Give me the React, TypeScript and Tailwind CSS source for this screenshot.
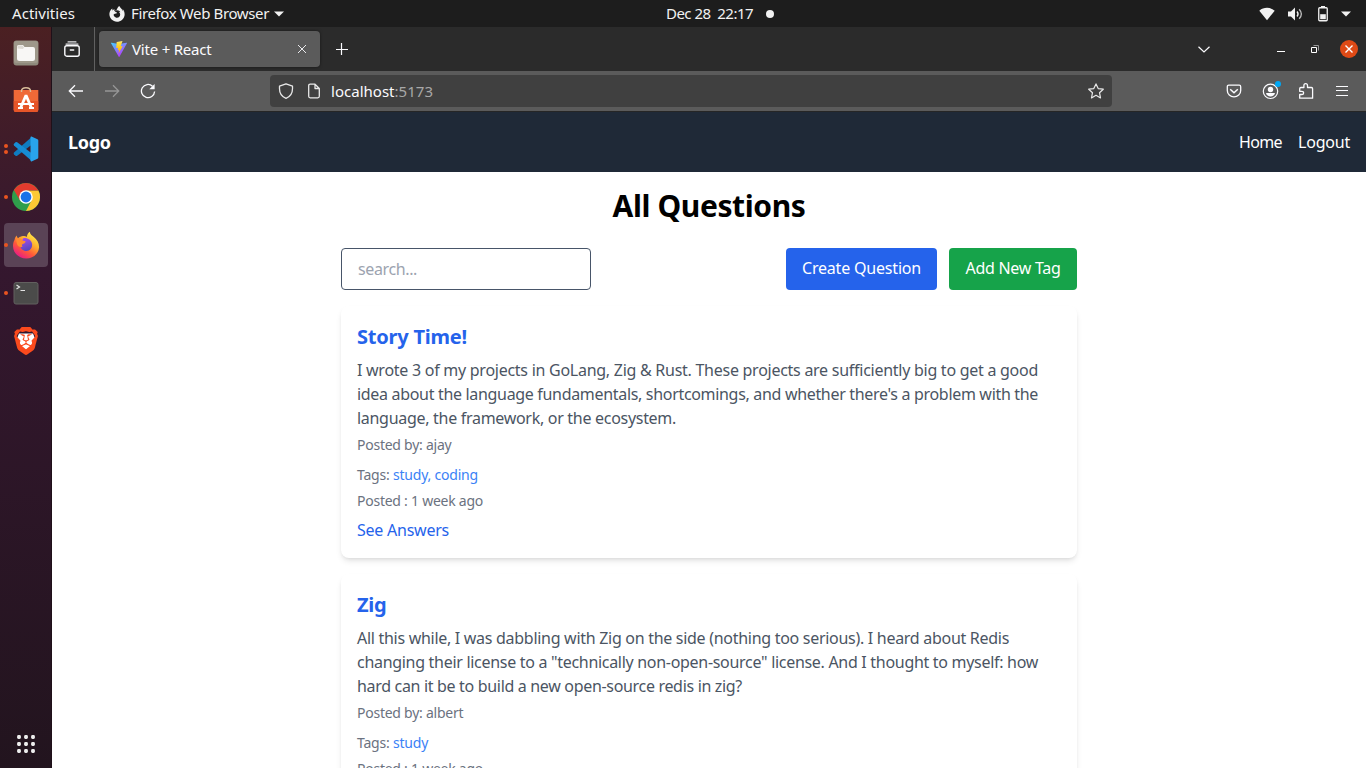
import type { ReactNode } from 'react';
import { FaFirefoxBrowser } from 'react-icons/fa';
import { SiBrave } from 'react-icons/si';

function Line({ children, className = '' }: { children: ReactNode; className?: string }) {
  return <span className={`block whitespace-nowrap ${className}`}>{children}</span>;
}

function TopBar() {
  return (
    <header className="flex h-[27px] shrink-0 items-center bg-[#1d1d1d] text-[15px] leading-[27px] text-[#f2f2f2]">
      <div className="flex w-[666px] items-center pl-3">
        <Line className="w-[97px] tracking-[0.05px]">Activities</Line>
        <FaFirefoxBrowser className="h-4 w-4" />
        <Line className="ml-[6px] w-[138px] tracking-[-0.372px]">Firefox Web Browser</Line>
        <svg className="ml-[5px] h-[6px] w-[10px]" viewBox="0 0 10 6"><path d="M0 0.5h10L5 5.5z" fill="currentColor" /></svg>
      </div>
      <Line className="w-[100px] pb-px whitespace-pre tracking-[-0.52px]">{'Dec 28  22:17'}</Line>
      <span className="h-2 w-2 rounded-full bg-[#f2f2f2]" />
      <div className="ml-auto flex items-center pr-[15px]">
        <svg className="h-4 w-4" viewBox="0 0 16 16"><path d="M0.3 4.7C4.7.9 11.300.9 15.700 4.700L8 14.200z" fill="currentColor" /></svg>
        <svg className="ml-[13px] h-4 w-4" viewBox="0 0 16 16" fill="none" stroke="currentColor">
          <path d="M0 5.500h3L7 1.500v13l-4-4H0z" fill="currentColor" stroke="none" />
          <path d="M9 5.500c1.300 1.500 1.300 3.500 0 5" strokeWidth="1.300" />
          <path d="M11.200 3.200c2.700 3 2.700 6.600 0 9.600" strokeWidth="1.300" opacity=".75" />
        </svg>
        <svg className="ml-[14px] h-4 w-[10px]" viewBox="0 0 10 16"><path d="M3 0h4v1.500H3z" fill="currentColor" /><rect x=".75" y="1.750" width="8.500" height="13" rx="1" fill="none" stroke="currentColor" strokeWidth="1.300" /><path d="M2.200 8.200h5.600v5H2.200z" fill="currentColor" /></svg>
        <svg className="ml-[13px] h-[6px] w-[10px]" viewBox="0 0 10 6"><path d="M0 0.500h10L5 5.500z" fill="currentColor" /></svg>
      </div>
    </header>
  );
}

function DockItem({ children, active = false, dots = 0 }: { children: ReactNode; active?: boolean; dots?: number }) {
  return (
    <div className="flex h-11 w-full items-center">
      <div className="flex w-1 shrink-0" />
      <div className={`relative flex h-11 w-11 shrink-0 items-center justify-center rounded-[4px] ${active ? 'bg-[#5a4356]' : ''}`}>
        <div className="absolute top-0 left-0 flex h-11 flex-col items-center justify-center gap-[2px]">
          {Array.from({ length: dots }, (_, i) => <span key={i} className="h-1 w-1 rounded-full bg-[#e95420]" />)}
        </div>
        {children}
      </div>
    </div>
  );
}

function Dock() {
  return (
    <aside className="flex w-[52px] shrink-0 flex-col border-r border-[#1f1019] bg-linear-to-b from-[#4b2022] via-[#35172f] via-30% to-[#22141e]">
      <div className="flex flex-col gap-1 pt-1">
        <DockItem>
          <svg className="h-[26px] w-[26px]" viewBox="0 0 26 26">
            <rect x=".5" y=".5" width="25" height="25" rx="3" fill="#8f8a7c" />
            <rect x="1" y="1" width="24" height="22" rx="2.500" fill="#9e988a" />
            <path d="M4 8V6.500Q4 5 5.500 5H10l1.500 2H20q2 0 2 2v9.500q0 2.500-2.500 2.500h-13Q4 21 4 18.500z" fill="#f8f7f5" />
            <path d="M4.500 8.500V6.500Q4.500 5.500 5.500 5.500h4l1.500 2-1 1.500z" fill="#dedbd4" />
          </svg>
        </DockItem>
        <DockItem>
          <svg className="mb-[2px] h-[26px] w-[26px]" viewBox="0 0 26 26">
            <path d="M.7 3h24.600v20q0 2-2 2H2.700q-2 0-2-2z" fill="#ef6937" />
            <path d="M.7 14h24.600v9q0 2-2 2H2.700q-2 0-2-2z" fill="#e65528" />
            <path d="M8.500 5V4Q8.500.8 13 .8t4.500 3.200V5" fill="none" stroke="#d8bc9a" strokeWidth="1.400" />
            <path d="M7.300 21.500 13 8.300l5.700 13.200" stroke="#fff" strokeWidth="2.800" strokeLinejoin="bevel" fill="none" />
            <path d="M5 17h16M5 21h5M16 21h5" stroke="#fff" strokeWidth="2.200" />
          </svg>
        </DockItem>
        <DockItem dots={2}>
          <svg className="h-[26px] w-[26px]" viewBox="0 0 26 26">
            <path d="M19 .8 1 16.600q-.8.800 0 1.600l1.500 1.500q.8.600 1.700 0L20 7.800z" fill="#0f7cc0" />
            <path d="M19 25.200 1 9.400Q.2 8.600 1 7.800l1.500-1.500q.8-.6 1.700 0L20 18.200z" fill="#178dd4" />
            <path d="m18.500.6 6 2.700q.8.400.8 1.200v17q0 .8-.8 1.200l-6 2.700q-1 .2-1-.8V1.400q0-1 1-.8z" fill="#29a3ec" />
          </svg>
        </DockItem>
        <DockItem dots={1}>
          <svg className="h-7 w-7" viewBox="0 0 28 28">
            <circle cx="14" cy="14" r="14" fill="#2f9e4b" />
            <path d="M14 7.500h12.400A14 14 0 0 1 14 28l5.600-10.700z" fill="#fcc934" />
            <path d="M1.880 7 8 17.500 14 14V7.500h12.380L26.120 7A14 14 0 0 0 1.880 7" fill="#e33b2e" />
            <circle cx="14" cy="14" r="6.800" fill="#fff" />
            <circle cx="14" cy="14" r="5.400" fill="#1b72e8" />
          </svg>
        </DockItem>
        <DockItem dots={1} active>
          <svg className="h-7 w-7" viewBox="0 0 28 28">
            <defs>
              <linearGradient id="fx" x1=".8" y1=".05" x2=".2" y2=".95"><stop offset="0" stopColor="#fff04b" /><stop offset=".35" stopColor="#ffb02e" /><stop offset=".65" stopColor="#ff5a38" /><stop offset="1" stopColor="#e7178a" /></linearGradient>
              <linearGradient id="fp" x1=".3" y1="0" x2=".6" y2="1"><stop offset="0" stopColor="#a54ce8" /><stop offset="1" stopColor="#5347bd" /></linearGradient>
            </defs>
            <path d="M2.500 9C3 6.500 4 5.200 4.700 4.500c.2 1.400.8 2.200 1.400 2.800C7.500 6 9.200 5.300 11 5.100c1.700 0 2.800.4 3.800 1C15 3.600 16 2 17.800.7c.3 2.500 1.800 3.600 4 5.300 3 2.500 5.400 6 5.300 10.200C26.600 22.800 21 27.500 14.300 27.500 6.800 27.500 1 22 1 15c0-2.300.5-4.200 1.500-6z" fill="url(#fx)" />
            <path d="M11 7.500c3-1.500 8 1 9 5 .8 4-2 7.500-5.800 7.500-3.200 0-5.700-2.300-5.900-5.500z" fill="url(#fp)" />
            <path d="M4 8c2.500-1 5-.5 6.500 1.500 1 .7 2.300.3 3.100.9-.2 1.500-1.800 2-3 2.600-1.100.8-.7 2.100 0 2.700-2.300.8-5-.2-5.600-2.700z" fill="#ff8b31" />
          </svg>
        </DockItem>
        <DockItem dots={1}>
          <svg className="h-[26px] w-[26px]" viewBox="0 0 26 26">
            <rect x="1" y="2.500" width="24" height="21.500" rx="2" fill="#4b4b4a" stroke="#62605f" />
            <path d="m3.500 5 3 2-3 2M7.500 10.500H12" stroke="#e4e4e4" strokeWidth="1.200" fill="none" />
          </svg>
        </DockItem>
        <DockItem>
          <div className="grid h-7 w-7 place-items-center">
            <svg className="col-start-1 row-start-1 h-7 w-7" viewBox="0 0 28 28">
              <path d="M7 6.500h14l2 5-4.500 10L14 25l-4.500-3.500-4.500-10z" fill="#fff" />
            </svg>
            <SiBrave className="col-start-1 row-start-1 h-7 w-7 text-[#fb4a1d]" />
          </div>
        </DockItem>
      </div>
      <svg className="mt-auto mb-[15px] ml-[17px] h-[18px] w-[18px]" viewBox="0 0 18 18" fill="#ededed">
        {[2, 9, 16].map((y) => [2, 9, 16].map((x) => <rect key={`${x}-${y}`} x={x - 1.900} y={y - 1.900} width="3.800" height="3.800" rx="1.300" />))}
      </svg>
    </aside>
  );
}

function TabStrip() {
  return (
    <div className="flex h-11 shrink-0 items-center bg-[#2b2b2b] text-[#fbfbfe]">
      <div className="flex h-11 w-[43px] items-center border-r border-[#616161] pl-3">
        <svg className="h-4 w-4" viewBox="0 0 16 16" fill="none" stroke="currentColor" strokeWidth="1.400" strokeLinecap="round">
          <path d="M4 .9h8M2 3.100h12" strokeWidth="1.100" opacity=".9" />
          <rect x=".8" y="4.800" width="14.400" height="10.400" rx="2" />
          <path d="M6.300 9h3.400" />
        </svg>
      </div>
      <div className="ml-1 flex h-9 w-[221px] items-center rounded-[4px] bg-[#5b5b5b] pl-3 shadow-[0_0_3px_rgba(0,0,0,0.5)]">
        <svg className="h-4 w-4" viewBox="0 0 32 32">
          <defs>
            <linearGradient id="v1" x1="0" y1="0" x2=".6" y2="1"><stop stopColor="#41d1ff" /><stop offset="1" stopColor="#bd34fe" /></linearGradient>
            <linearGradient id="v2" x1="0" y1="0" x2="0" y2="1"><stop stopColor="#ffea83" /><stop offset=".2" stopColor="#ffdd35" /><stop offset="1" stopColor="#ffa800" /></linearGradient>
          </defs>
          <path d="m31.900 4.600-15 26.800a.8.800 0 0 1-1.400 0L.1 4.600a.8.800 0 0 1 .9-1.200l15 2.700 15-2.700a.8.800 0 0 1 .9 1.200z" fill="url(#v1)" />
          <path d="M22.700 0 11.600 2.200a.4.400 0 0 0-.3.400l-.7 11.500 3.600-.2-.9 4.500 3.100-.4-1.500 7 8.500-14.600-4 .2 3.600-10.400z" fill="url(#v2)" />
        </svg>
        <Line className="ml-[5px] text-[15px] leading-5 tracking-[-0.2px]">Vite + React</Line>
        <svg className="mr-[14px] ml-auto h-2 w-2 overflow-visible" viewBox="0 0 8 8"><path d="m0 0 8 8M8 0 0 8" stroke="currentColor" strokeWidth=".9" /></svg>
      </div>
      <svg className="ml-[16px] h-3 w-3" viewBox="0 0 12 12"><path d="M5.500 0v12M0 6.500h12" stroke="currentColor" strokeWidth="1.200" /></svg>
      <div className="ml-auto flex h-11 items-center pr-2">
        <svg className="mr-[67px] h-[7px] w-3" viewBox="0 0 12 7"><path d="m.5.700 5.500 5.300L11.500.700" fill="none" stroke="currentColor" strokeWidth="1.200" /></svg>
        <span className="mt-[5px] mr-[26px] h-px w-2 bg-white" />
        <svg className="mr-[21px] h-2 w-2" viewBox="0 0 8 8" fill="none"><path d="M2.500.500h5v5" stroke="#999" /><path d="M.5 2.500h5v5h-5z" stroke="#fff" /></svg>
        <span className="flex h-[18px] w-[18px] items-center justify-center rounded-full bg-[#df4a16]">
          <svg className="h-2 w-2" viewBox="0 0 8 8"><path d="m.5.500 7 7M7.500.500l-7 7" stroke="#fff" strokeWidth="1.400" /></svg>
        </span>
      </div>
    </div>
  );
}

function Toolbar() {
  return (
    <div className="flex h-[41px] shrink-0 items-center border-b border-[#262626] bg-[#5b5b5b] text-[#fbfbfe]">
      <div className="flex w-[218px] gap-5 pl-4">
        <svg className="h-4 w-4" viewBox="0 0 16 16" fill="none" stroke="currentColor" strokeWidth="1.300"><path d="M15 8H1.500M7 2.300 1.300 8 7 13.700" /></svg>
        <svg className="h-4 w-4 text-[#969696]" viewBox="0 0 16 16" fill="none" stroke="currentColor" strokeWidth="1.300"><path d="M1 8h13.500M9 2.300 14.700 8 9 13.700" /></svg>
        <svg className="h-4 w-4" viewBox="0 0 16 16" fill="none" stroke="currentColor" strokeWidth="1.300"><path d="M12.500 3.200A6.600 6.600 0 1 0 14.600 8.500" /><path d="M14.600 1v5.300H9.300z" fill="currentColor" stroke="none" /></svg>
      </div>
      <div className="flex h-8 w-[842px] items-center rounded-[4px] bg-[#404040] pr-2 pl-2">
        <svg className="h-4 w-4" viewBox="0 0 16 16" fill="none" stroke="#e8e8e8" strokeWidth="1.300" strokeLinejoin="round"><path d="M8 .8 1.500 3.200v2.500C1.500 10 3.500 13.500 8 15.300c4.500-1.800 6.500-5.300 6.500-9.600V3.200z" /></svg>
        <svg className="ml-3 h-4 w-4" viewBox="0 0 16 16" fill="none" stroke="#e8e8e8" strokeWidth="1.300" strokeLinejoin="round"><path d="M9 1.200H4.200q-1.500 0-1.500 1.500v10.600q0 1.500 1.500 1.500h7.600q1.500 0 1.500-1.500V5.500zM9 1.200v4.300h4.300" /></svg>
        <Line className="ml-[9px] text-[15px] leading-5 tracking-[0.02px]">localhost<span className="text-[#a8a8a8]">:5173</span></Line>
        <svg className="ml-auto h-4 w-4" viewBox="0 0 16 16" fill="none" stroke="#e8e8e8" strokeWidth="1.200" strokeLinejoin="round"><path d="m8 .9 2.200 4.700 5.100.6-3.800 3.500 1 5.200L8 12.300l-4.500 2.600 1-5.200L.7 6.200l5.100-.6z" /></svg>
      </div>
      <div className="ml-auto flex gap-5 pr-4">
        <svg className="h-4 w-4" viewBox="0 0 16 16" fill="none" stroke="currentColor" strokeWidth="1.300"><path d="M2.800 2.200h10.400q1.500 0 1.500 1.500V7.500c0 3.800-3 6.300-6.700 6.300S1.300 11.300 1.300 7.500V3.700q0-1.500 1.500-1.500z" /><path d="M4.200 6.200 8 9.700l3.800-3.500" strokeWidth="1.500" /></svg>
        <div className="relative h-4 w-4">
          <svg className="h-4 w-4 overflow-visible" viewBox="-.5 -.3 16 16"><circle cx="8" cy="8" r="7.200" fill="none" stroke="currentColor" strokeWidth="1.200" /><circle cx="8" cy="6.200" r="2.700" fill="currentColor" /><path d="M3.500 9.700h9c-.4 2.100-2.300 3.400-4.500 3.400s-4.100-1.300-4.500-3.400z" fill="currentColor" /></svg>
          <span className="absolute -top-[2px] left-[13px] h-[6px] w-[6px] rounded-full bg-[#00a7f5]" />
        </div>
        <svg className="h-4 w-4 overflow-visible" viewBox="-.7 0 16 16" fill="none" stroke="currentColor" strokeWidth="1.300" strokeLinejoin="round"><path d="M1 5.700q0-1.200 1.200-1.200h3V2.500Q5.200.600 7 .6t1.800 1.900v2h3.900q1.200 0 1.200 1.200v9.500H1v-3.700h2.200q1.700 0 1.700-1.600T3.200 8.300H1z" /></svg>
        <svg className="h-4 w-4" viewBox="0 0 16 16"><path d="M2 3.500h12M2 7.500h12M2 12.500h12" stroke="currentColor" strokeWidth="1.200" /></svg>
      </div>
    </div>
  );
}

interface Question {
  title: string;
  body: [string, string][];
  author: string;
  tags: string;
}

const questions: Question[] = [
  {
    title: 'Story Time!',
    body: [
      ['I wrote 3 of my projects in GoLang, Zig & Rust. These projects are sufficiently big to get a good', 'tracking-[-0.265px]'],
      ["idea about the language fundamentals, shortcomings, and whether there's a problem with the", 'tracking-[-0.319px]'],
      ['language, the framework, or the ecosystem.', 'tracking-[-0.294px]'],
    ],
    author: 'ajay',
    tags: 'study, coding',
  },
  {
    title: 'Zig',
    body: [
      ['All this while, I was dabbling with Zig on the side (nothing too serious). I heard about Redis', 'tracking-[-0.289px]'],
      ['changing their license to a "technically non-open-source" license. And I thought to myself: how', 'tracking-[-0.298px]'],
      ['hard can it be to build a new open-source redis in zig?', 'tracking-[-0.322px]'],
    ],
    author: 'albert',
    tags: 'study',
  },
];

function QuestionCard({ q }: { q: Question }) {
  return (
    <article className="h-[252px] shrink-0 rounded-lg bg-white p-4 pt-[17px] shadow-[0_4px_6px_-1px_rgba(0,0,0,0.1),0_2px_4px_-2px_rgba(0,0,0,0.1)]">
      <h2 className="mb-[7px] text-[20px] leading-7 font-bold tracking-[-0.22px] text-[#2563eb]">{q.title}</h2>
      <p className="text-[16px] leading-6 text-[#4b5563]">
        {q.body.map(([text, tracking]) => <Line key={text} className={tracking}>{text}</Line>)}
      </p>
      <p className="mt-[5px] text-[14px] leading-5 tracking-[-0.25px] text-[#6b7280]">Posted by: {q.author}</p>
      <p className="mt-[10px] text-[14px] leading-5 tracking-[-0.21px] text-[#6b7280]">Tags: <span className="text-[#3b82f6]">{q.tags}</span></p>
      <p className="mt-[6px] text-[14px] leading-5 tracking-[-0.25px] text-[#6b7280]">Posted : 1 week ago</p>
      <a className="mt-[7px] block text-[16px] leading-6 tracking-[-0.24px] text-[#2563eb]">See Answers</a>
    </article>
  );
}

function Page() {
  return (
    <main className="flex min-h-0 flex-1 flex-col bg-white">
      <nav className="flex h-[60px] shrink-0 items-center justify-between bg-[#1f2937] px-4 text-[16px] leading-6 text-white">
        <span className="text-[18px] leading-7 font-bold tracking-[-0.33px]">Logo</span>
        <div className="flex gap-4">
          <Line className="w-[43px] tracking-[-0.63px]">Home</Line>
          <Line className="w-[52px] tracking-[-0.21px]">Logout</Line>
        </div>
      </nav>
      <div className="mx-auto flex min-h-0 w-[736px] flex-1 flex-col pt-4">
        <h1 className="text-center text-[30px] leading-9 font-bold tracking-[-0.38px] text-black">All Questions</h1>
        <div className="mt-6 flex h-[42px] shrink-0 justify-between">
          <input className="w-[250px] rounded border border-[#475569] px-4 text-[16px] tracking-[-0.376px] placeholder:text-[#9ca3af]" placeholder="search..." />
          <div className="flex gap-3 text-[16px] leading-10 text-white">
            <button className="w-[151px] rounded bg-[#2563eb] pb-[2px] tracking-[-0.194px] whitespace-nowrap">Create Question</button>
            <button className="w-32 rounded bg-[#16a34a] pb-[2px] tracking-[-0.281px] whitespace-nowrap">Add New Tag</button>
          </div>
        </div>
        <div className="mt-4 flex flex-col gap-4">
          {questions.map((q) => <QuestionCard key={q.title} q={q} />)}
        </div>
      </div>
    </main>
  );
}

export default function App() {
  return (
    <div className="flex h-[768px] w-[1366px] flex-col overflow-hidden font-['Noto_Sans','Open_Sans',sans-serif]">
      <TopBar />
      <div className="flex min-h-0 flex-1">
        <Dock />
        <div className="flex min-w-0 flex-1 flex-col overflow-hidden">
          <TabStrip />
          <Toolbar />
          <Page />
        </div>
      </div>
    </div>
  );
}
